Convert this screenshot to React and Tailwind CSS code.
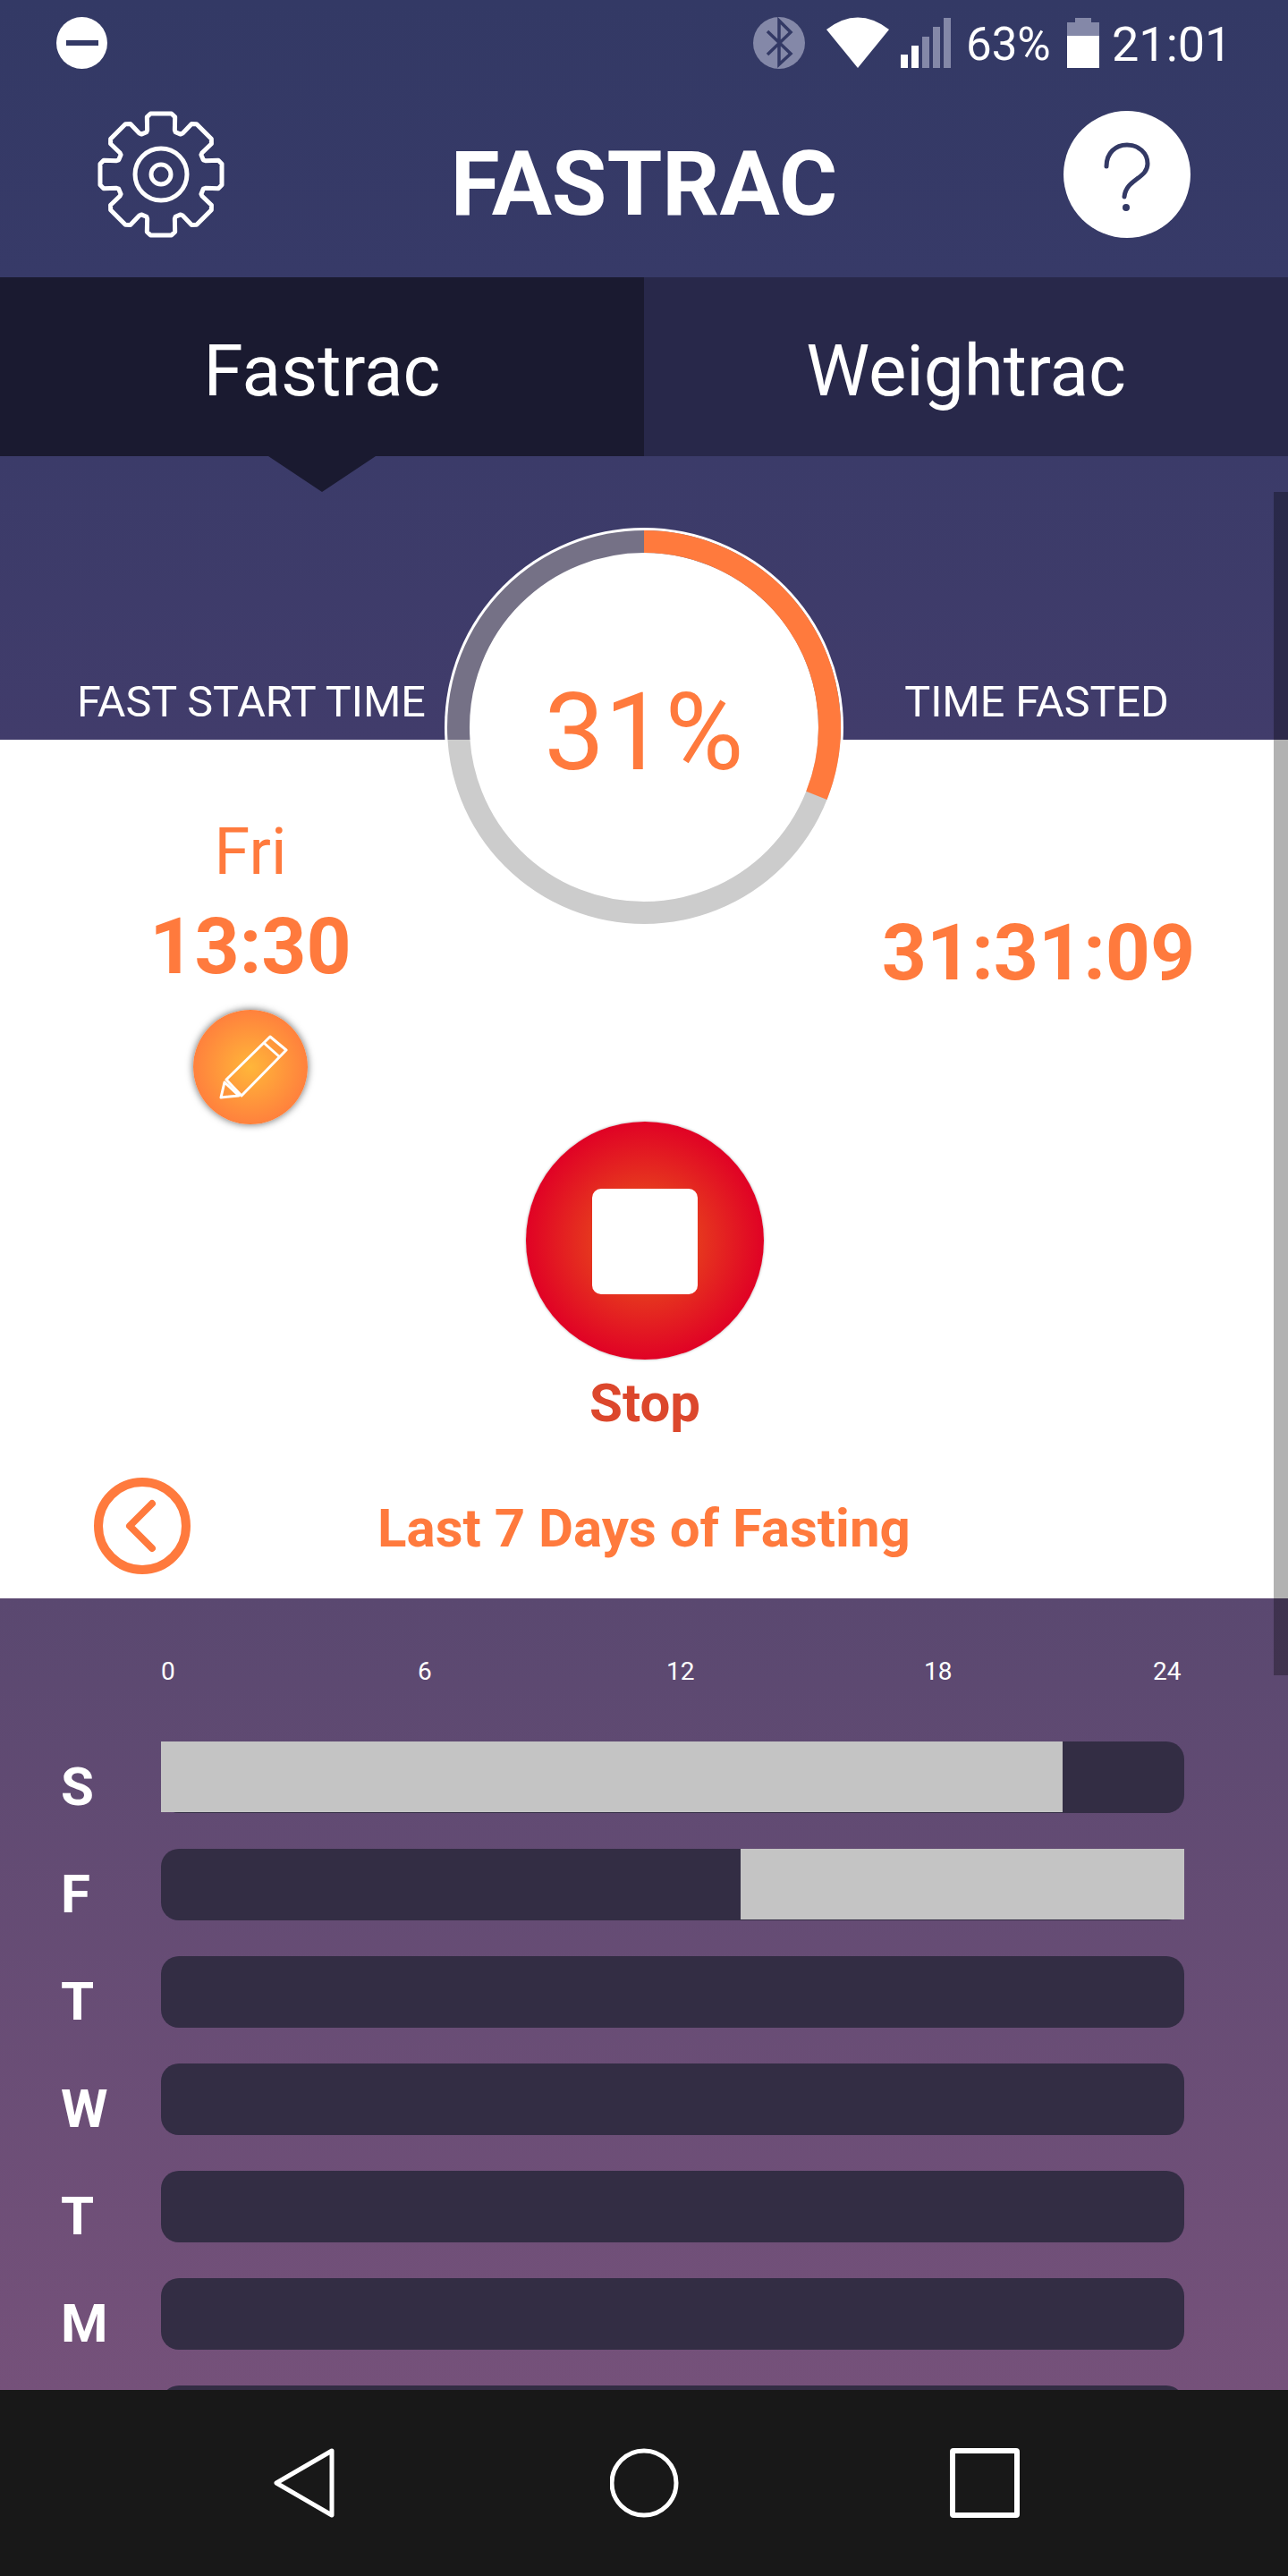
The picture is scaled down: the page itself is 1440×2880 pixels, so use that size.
const gearPath = (() => {
  const c = 71;
  const pt = (r, a) => `${(c + r * Math.sin(a)).toFixed(2)} ${(c - r * Math.cos(a)).toFixed(2)}`;
  const out = [];
  for (let i = 0; i < 8; i++) {
    const t = (i * Math.PI) / 4;
    out.push(pt(50, t - 0.33), pt(52, t - 0.3), pt(66, t - 0.24), pt(69, t - 0.17), pt(69, t + 0.17), pt(66, t + 0.24), pt(52, t + 0.3), pt(50, t + 0.33));
  }
  return "M" + out.join(" L") + " Z";
})();

const ringArc = (() => {
  const r = 207.5;
  const a = (111.6 * Math.PI) / 180;
  const x = 230 + r * Math.sin(a);
  const y = 230 - r * Math.cos(a);
  return `M230 22.5 A${r} ${r} 0 0 1 ${x.toFixed(2)} ${y.toFixed(2)}`;
})();

const ticks = [
  ["0", "w-[287px]"],
  ["6", "w-[278px]"],
  ["12", "w-[288px]"],
  ["18", "w-[256px]"],
  ["24", "w-[34px]"],
];

const days = [
  { d: "S", w: "w-[1008px]", end: false },
  { d: "F", w: "w-[496px]", end: true },
  { d: "T" },
  { d: "W" },
  { d: "T" },
  { d: "M" },
  { d: "" },
];

function Gear() {
  return (
    <svg width="142" height="142" viewBox="0 0 142 142" fill="none" stroke="#fff" strokeWidth="5" strokeLinejoin="round">
      <path d={gearPath} />
      <circle cx="71" cy="71" r="29" />
      <circle cx="71" cy="71" r="11" />
    </svg>
  );
}

function StatusIcons() {
  return (
    <div className="flex items-start">
      <svg width="58" height="58" viewBox="0 0 58 58" fill="none">
        <circle cx="29" cy="29" r="29" fill="#8488a8" />
        <path d="M16 16 L42 41 L29 53 L29 4 L42 17 L16 42" stroke="#333965" strokeWidth="3.5" />
      </svg>
      <svg className="ml-[24px]" width="70" height="58" viewBox="0 0 70 58">
        <path d="M0 14 Q35 -13 70 14 L35 57 Z" fill="#fff" />
      </svg>
      <svg className="ml-[13px]" width="56" height="58" viewBox="0 0 56 58">
        <rect x="0" y="42" width="8" height="15" fill="#fff" />
        <rect x="12" y="32" width="8" height="25" fill="#fff" />
        <rect x="24" y="22" width="8" height="35" fill="#8488a8" />
        <rect x="36" y="11" width="8" height="46" fill="#8488a8" />
        <rect x="48" y="1" width="8" height="56" fill="#8488a8" />
      </svg>
      <span className="ml-[17px] w-[95px] pt-[2px] text-[51px] leading-[58px] text-white whitespace-nowrap">63%</span>
      <svg className="ml-[18px]" width="36" height="58" viewBox="0 0 36 58">
        <path d="M9 1 H27 V6 H36 V21 H0 V6 H9 Z" fill="#8488a8" />
        <rect x="0" y="21" width="36" height="36" fill="#fff" />
      </svg>
      <span className="ml-[14px] w-[129px] pt-[2px] text-[54px] leading-[58px] text-white whitespace-nowrap">21:01</span>
    </div>
  );
}

function Ring() {
  return (
    <div className="absolute left-[490px] top-[583px] w-[460px] h-[460px] flex items-center justify-center">
      <svg className="absolute inset-0" width="460" height="460" viewBox="0 0 460 460" fill="none">
        <defs>
          <clipPath id="upper">
            <rect x="0" y="0" width="460" height="244" />
          </clipPath>
          <clipPath id="lower">
            <rect x="0" y="244" width="460" height="216" />
          </clipPath>
        </defs>
        <circle cx="230" cy="230" r="223" fill="#fff" clipPath="url(#upper)" />
        <circle cx="230" cy="230" r="207.5" stroke="#757186" strokeWidth="25" clipPath="url(#upper)" />
        <circle cx="230" cy="230" r="207.5" stroke="#cccccc" strokeWidth="25" clipPath="url(#lower)" />
        <path d={ringArc} stroke="#ff7a3d" strokeWidth="25" />
      </svg>
      <span className="relative mt-[12px] text-[120px] leading-none text-[#ff7a3d]">31%</span>
    </div>
  );
}

export default function App() {
  return (
    <div className="relative w-[1440px] h-[2880px] overflow-hidden flex flex-col bg-white font-['Roboto',sans-serif]">
      <header className="h-[310px] pt-[19px] px-[63px] bg-gradient-to-b from-[#333965] to-[#373a68] text-white">
        <div className="flex justify-between items-start h-[58px] pr-[5px]">
          <svg width="57" height="58" viewBox="0 0 57 58">
            <ellipse cx="28.5" cy="29" rx="28.5" ry="29" fill="#fff" />
            <rect x="11" y="26" width="36" height="6" fill="#333965" />
          </svg>
          <StatusIcons />
        </div>
        <div className="mt-[47px] px-[46px] flex items-center justify-between">
          <Gear />
          <h1 className="pt-[22px] text-[100px] leading-none font-bold whitespace-nowrap">FASTRAC</h1>
          <svg width="142" height="142" viewBox="0 0 142 142" fill="none">
            <circle cx="71" cy="71" r="71" fill="#fff" />
            <path d="M48 62 C48 47 58 38 71 38 C84 38 94 47 94 59 C94 76 70 76 68 96" stroke="#333965" strokeWidth="5" strokeLinecap="round" />
            <circle cx="70" cy="108" r="4" fill="#333965" />
          </svg>
        </div>
      </header>

      <nav className="h-[200px] grid grid-cols-2 text-white text-[80px] leading-none">
        <div className="bg-[#1a1a30] flex items-center justify-center pt-[10px]">Fastrac</div>
        <div className="bg-[#28284a] flex items-center justify-center pt-[10px]">Weightrac</div>
      </nav>

      <section className="h-[317px] bg-gradient-to-b from-[#3b3b69] to-[#413c6b] flex items-end justify-between pb-[18px] text-white text-[48.5px] leading-none">
        <div className="w-[562px] text-center whitespace-nowrap">FAST START TIME</div>
        <div className="w-[562px] text-center whitespace-nowrap">TIME FASTED</div>
      </section>

      <section className="h-[960px] bg-white flex flex-col">
        <div className="flex h-[824px] text-[#ff7a3d]">
          <div className="w-[560px] pt-[90px] flex flex-col items-center">
            <div className="text-[72px] leading-none">Fri</div>
            <div className="mt-[26px] text-[87.5px] leading-none font-bold">13:30</div>
            <div className="mt-[26px] w-[128px] h-[128px] rounded-full bg-[radial-gradient(circle,#ffb63a_0%,#ff7a3d_80%)] shadow-[0_0_8px_rgba(0,0,0,0.6)]">
              <svg width="128" height="128" viewBox="0 0 128 128" fill="none" stroke="#fff" strokeWidth="3" strokeLinejoin="round">
                <path d="M86 30 L104 45 L54 96 L37 78 Z" />
                <path d="M79 37 L97 53" />
                <path d="M35 81 L51 96 L31 98 Z" />
              </svg>
            </div>
          </div>
          <div className="w-[322px] pt-[427px] flex flex-col items-center">
            <div className="shrink-0 w-[266px] h-[266px] pt-[2px] rounded-full bg-[radial-gradient(circle,#e6391e_30%,#e00025_72%)] flex items-center justify-center shadow-[0_0_3px_rgba(0,0,0,0.35)]">
              <div className="w-[118px] h-[118px] rounded-[10px] bg-white" />
            </div>
            <div className="mt-[19px] text-[60px] leading-none font-bold text-[#dc472c]">Stop</div>
          </div>
          <div className="w-[558px] pt-[195px] flex flex-col items-center">
            <div className="text-[87.5px] leading-none font-bold whitespace-nowrap">31:31:09</div>
          </div>
        </div>
        <div className="grid grid-cols-[1fr_auto_1fr] items-center h-[110px] pl-[105px]">
          <svg width="110" height="110" viewBox="0 0 110 110" fill="none" stroke="#ff7a3d" strokeLinecap="round" strokeLinejoin="round">
            <circle cx="54" cy="55" r="49" strokeWidth="10" />
            <path d="M65 30 L40 55 L65 80" strokeWidth="8" />
          </svg>
          <div className="-ml-[105px] pt-[6px] text-[60px] leading-none font-bold text-[#ff7a3d] whitespace-nowrap">Last 7 Days of Fasting</div>
          <div />
        </div>
        <div className="h-[26px]" />
      </section>

      <section className="flex-1 min-h-0 overflow-hidden bg-gradient-to-b from-[#5a4870] to-[#75517a] text-white">
        <div className="pt-[68px] pl-[180px] flex text-[28px] leading-none">
          {ticks.map(([t, w]) => (
            <div key={t} className={w}>{t}</div>
          ))}
        </div>
        <div className="mt-[64px] flex flex-col gap-[40px]">
          {days.map((row, i) => (
            <div key={i} className="flex h-[80px] shrink-0">
              <div className="w-[180px] pl-[68px] pt-[21px] text-[60px] leading-none font-bold">{row.d}</div>
              <div className={`w-[1144px] h-[80px] rounded-[20px] bg-[#332d44] flex ${row.end ? "justify-end" : "justify-start"}`}>
                {row.w && <div className={`${row.w} h-[79px] bg-[#c4c4c4]`} />}
              </div>
            </div>
          ))}
        </div>
      </section>

      <footer className="h-[208px] bg-[#181818] flex items-start pt-[65px] pl-[305px]">
        <svg width="70" height="78" viewBox="0 0 70 78" fill="none" stroke="#fff" strokeWidth="5" strokeLinejoin="round">
          <path d="M66 3 L4 39 L66 75 Z" />
        </svg>
        <svg className="ml-[307px]" width="78" height="78" viewBox="0 0 78 78" fill="none" stroke="#fff" strokeWidth="5">
          <circle cx="38" cy="39" r="36" />
        </svg>
        <svg className="ml-[302px]" width="78" height="78" viewBox="0 0 78 78" fill="none" stroke="#fff" strokeWidth="6">
          <rect x="3" y="3" width="72" height="72" rx="1" />
        </svg>
      </footer>

      <div className="absolute left-[300px] top-[510px] w-0 h-0 border-l-[60px] border-r-[60px] border-t-[40px] border-l-transparent border-r-transparent border-t-[#1a1a30]" />
      <Ring />
      <div className="absolute right-0 top-[550px] w-[16px] h-[1323px] bg-black/30" />
    </div>
  );
}
